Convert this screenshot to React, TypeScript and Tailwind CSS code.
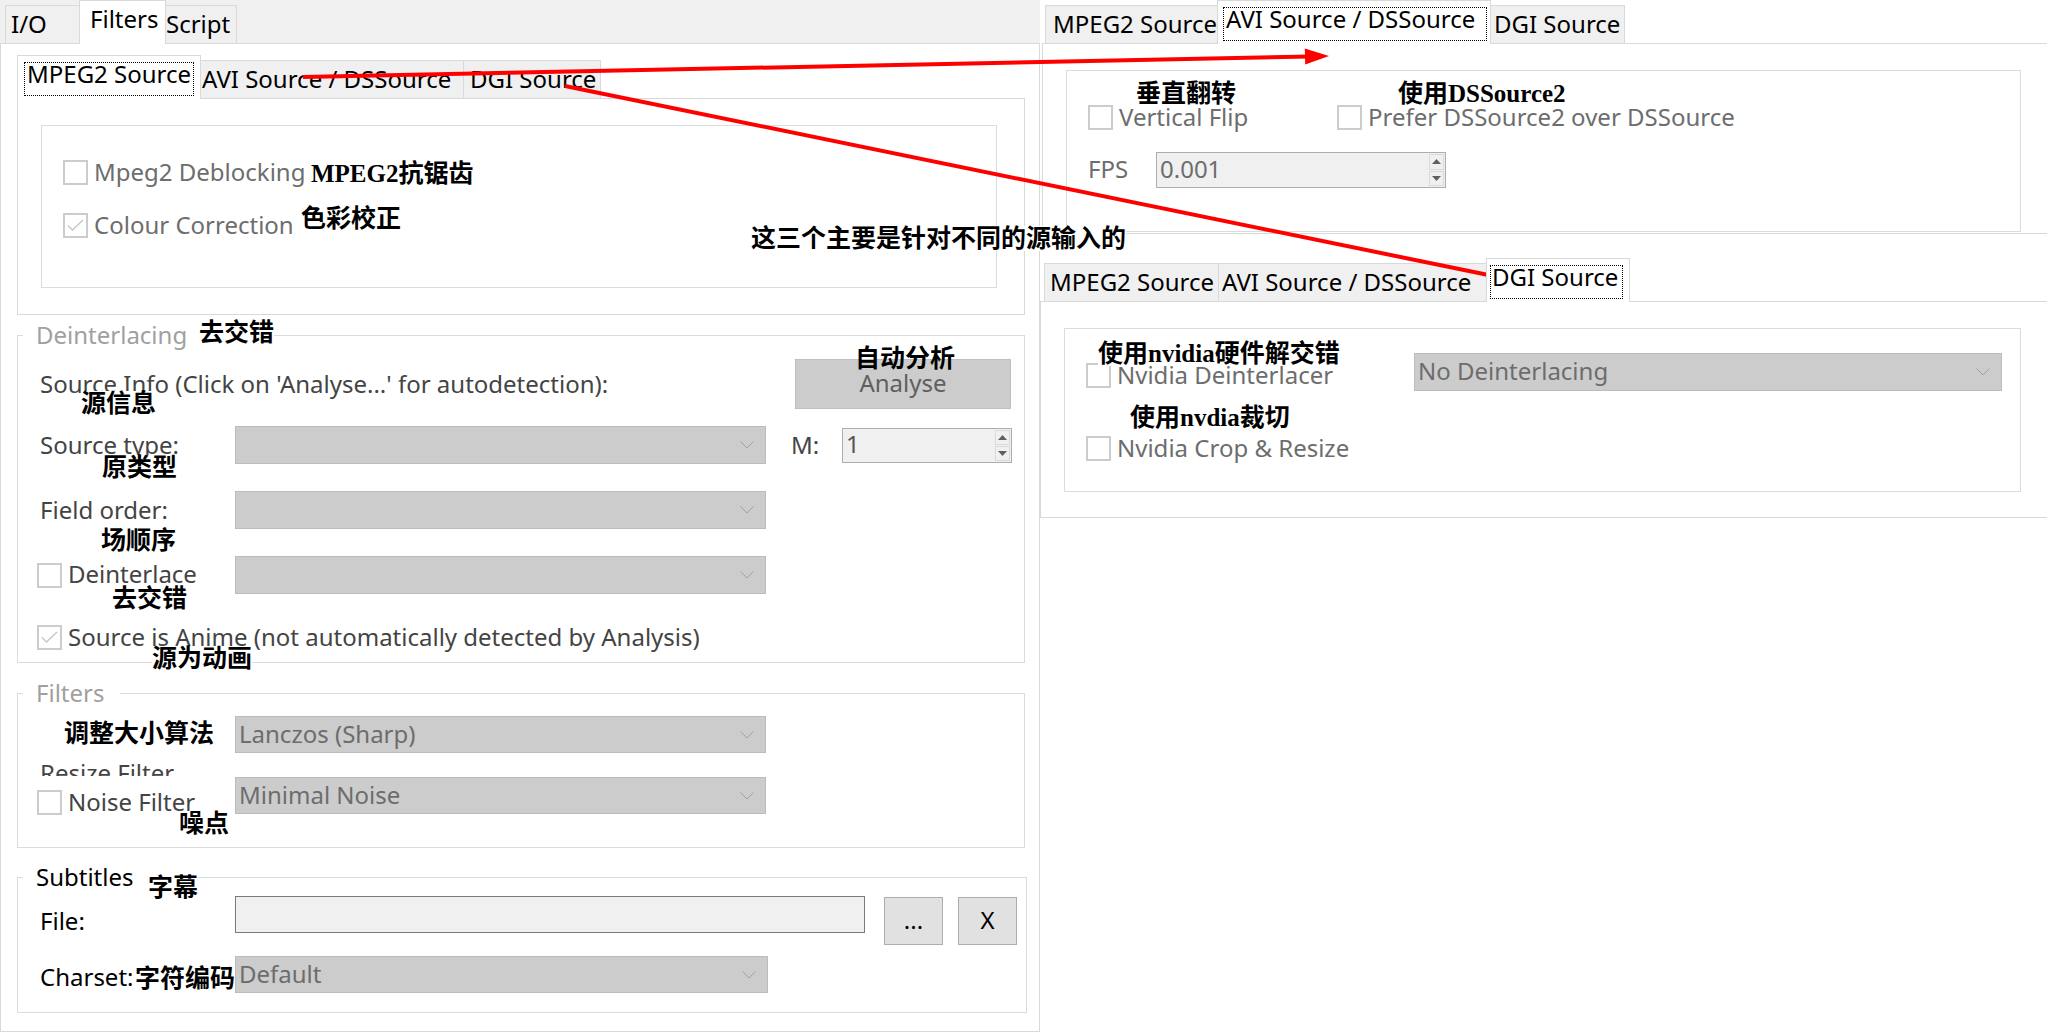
import React from 'react'

const NOTE =
  "absolute bg-white whitespace-nowrap font-bold text-black text-[25px] leading-[25px] font-['Liberation_Serif','Noto_Sans_CJK_SC',serif]"

function Note({ className, children }: { className: string; children: React.ReactNode }) {
  return <div className={`${NOTE} ${className}`}>{children}</div>
}

function Chevron() {
  return (
    <svg width="14" height="8" viewBox="0 0 14 8" className="shrink-0">
      <polyline points="0.5,0.5 7,7 13.5,0.5" fill="none" stroke="#a0a0a0" strokeWidth="1" />
    </svg>
  )
}

function Combo({ text, className }: { text?: string; className: string }) {
  return (
    <div
      className={`flex items-center justify-between shrink-0 bg-[#cccccc] border border-[#bcbcbc] pl-[3px] pr-[11px] text-[#6d6d6d] ${className}`}
    >
      <span className="whitespace-nowrap pb-[2px]">{text}</span>
      <Chevron />
    </div>
  )
}

function Check({ checked }: { checked?: boolean }) {
  return (
    <div className="w-[25px] h-[25px] shrink-0 border-2 border-[#cccccc] bg-white flex items-center justify-center">
      {checked && (
        <svg width="17" height="13" viewBox="0 0 17 13">
          <polyline points="1,6.5 5.5,11 16,1" fill="none" stroke="#c6c6c6" strokeWidth="1.4" />
        </svg>
      )}
    </div>
  )
}

function CheckRow({ label, checked, className = '' }: { label: string; checked?: boolean; className?: string }) {
  return (
    <div className={`flex items-center gap-[6px] h-[25px] ${className}`}>
      <Check checked={checked} />
      <span className="whitespace-nowrap pb-[2px]">{label}</span>
    </div>
  )
}

function Spin({ value, className }: { value: string; className: string }) {
  return (
    <div className={`flex shrink-0 bg-[#f0f0f0] border border-[#adadad] ${className}`}>
      <div className="flex-1 flex items-center pl-[3px] pb-[2px]">{value}</div>
      <div className="w-[16px] flex flex-col py-[1px] pr-[1px] gap-[1px]">
        <div className="flex-1 flex items-center justify-center border border-[#dadada]">
          <svg width="9" height="5" viewBox="0 0 9 5">
            <polygon points="0,5 4.5,0 9,5" fill="#606060" />
          </svg>
        </div>
        <div className="flex-1 flex items-center justify-center border border-[#dadada]">
          <svg width="9" height="5" viewBox="0 0 9 5">
            <polygon points="0,0 9,0 4.5,5" fill="#606060" />
          </svg>
        </div>
      </div>
    </div>
  )
}

function Tab({ children, className }: { children: React.ReactNode; className: string }) {
  return (
    <div
      className={`h-[39px] shrink-0 flex items-center pb-[2px] whitespace-nowrap bg-[#f0f0f0] border border-[#d9d9d9] ${className}`}
    >
      {children}
    </div>
  )
}

function ActiveTab({ children, className }: { children: React.ReactNode; className: string }) {
  return (
    <div
      className={`relative z-10 h-[44px] shrink-0 flex items-center whitespace-nowrap bg-white border-x border-t border-[#d9d9d9] ${className}`}
    >
      {children}
    </div>
  )
}

// selected tab with the dotted keyboard-focus rectangle
function FocusTab({ children, className, inner }: { children: React.ReactNode; className: string; inner: string }) {
  return (
    <div
      className={`relative z-10 h-[44px] shrink-0 bg-white border-x border-t border-[#d9d9d9] pt-[6px] pb-[3px] ${className}`}
    >
      <div className={`h-full border border-dotted border-black flex items-center pb-[11px] whitespace-nowrap ${inner}`}>
        {children}
      </div>
    </div>
  )
}

export default function App() {
  return (
    <div className="relative w-[2047px] h-[1033px] overflow-hidden bg-white flex text-[24px] leading-[32px] text-black font-['Noto_Sans',sans-serif]">
      {/* Left: Filters page */}
      <div className="w-[1040px] shrink-0 flex flex-col">
        <div className="flex items-end h-[44px] bg-[#f0f0f0]">
          <div className="w-[5px] h-full border-b border-[#d9d9d9]" />
          <Tab className="w-[75px] pl-[5px]">I/O</Tab>
          <ActiveTab className="w-[87px] -ml-px pl-[10px] pb-[7px]">Filters</ActiveTab>
          <Tab className="w-[72px] -ml-px pl-0">Script</Tab>
          <div className="flex-1 h-full border-b border-[#d9d9d9]" />
        </div>

        <div className="h-[988px] border-x border-b border-[#d9d9d9] pt-[11px] pl-[16px] flex flex-col items-start">
          {/* source type tabs */}
          <div className="w-[1008px]">
            <div className="flex items-end h-[44px]">
              <FocusTab className="w-[184px] pl-[6px] pr-[6px]" inner="pl-[2px]">
                MPEG2 Source
              </FocusTab>
              <Tab className="w-[264px] -ml-px pl-[1px]">AVI Source / DSSource</Tab>
              <Tab className="w-[138px] -ml-px pl-[6px]">DGI Source</Tab>
              <div className="flex-1 h-full border-b border-[#d9d9d9]" />
            </div>
            <div className="h-[216px] border-x border-b border-[#d9d9d9] pt-[26px] pl-[23px]">
              <div className="w-[956px] h-[163px] border border-[#dcdcdc] pt-[34px] pl-[21px] flex flex-col gap-[28px] text-[#6d6d6d]">
                <CheckRow label="Mpeg2 Deblocking" />
                <CheckRow label="Colour Correction" checked />
              </div>
            </div>
          </div>

          {/* Deinterlacing */}
          <fieldset className="mt-[4px] w-[1008px] border border-[#dcdcdc] pb-[12px] text-[#444444]">
            <legend className="ml-[5px] pl-[13px] pr-[16px] text-[#a0a0a0]">Deinterlacing</legend>
            <div className="flex items-center mt-[8px] h-[50px] pl-[22px] pr-[13px]">
              <span className="flex-1 whitespace-nowrap">Source Info (Click on 'Analyse...' for autodetection):</span>
              <div className="w-[216px] h-[50px] bg-[#cccccc] border border-[#bfbfbf] flex items-center justify-center pb-[2px] text-[#5f5f5f]">
                Analyse
              </div>
            </div>
            <div className="flex items-center mt-[17px] h-[38px] pl-[22px]">
              <span className="w-[195px] shrink-0 whitespace-nowrap">Source type:</span>
              <Combo className="w-[531px] h-[38px]" />
              <span className="ml-[25px] w-[51px] shrink-0">M:</span>
              <Spin value="1" className="w-[170px] h-[35px] text-[#555555]" />
            </div>
            <div className="flex items-center mt-[27px] h-[38px] pl-[22px]">
              <span className="w-[195px] shrink-0 whitespace-nowrap">Field order:</span>
              <Combo className="w-[531px] h-[38px]" />
            </div>
            <div className="flex items-center mt-[27px] h-[38px] pl-[19px]">
              <div className="w-[198px] shrink-0">
                <CheckRow label="Deinterlace" />
              </div>
              <Combo className="w-[531px] h-[38px]" />
            </div>
            <CheckRow
              className="mt-[31px] pl-[19px]"
              label="Source is Anime (not automatically detected by Analysis)"
              checked
            />
          </fieldset>

          {/* Filters */}
          <fieldset className="mt-[14px] w-[1008px] border border-[#dcdcdc] pb-[32px] text-[#444444]">
            <legend className="ml-[5px] pl-[13px] pr-[16px] text-[#a0a0a0]">Filters</legend>
            <div className="mt-[7px] pl-[217px]">
              <Combo className="w-[531px] h-[37px]" text="Lanczos (Sharp)" />
            </div>
            <div className="flex">
              <div className="w-[217px] shrink-0 flex flex-col pt-[4px]">
                {/* label partly hidden by the widget below it */}
                <div className="h-[19px] overflow-hidden pl-[22px] whitespace-nowrap">Resize Filter</div>
                <CheckRow className="mt-[14px] pl-[19px]" label="Noise Filter" />
              </div>
              <Combo className="mt-[24px] w-[531px] h-[37px]" text="Minimal Noise" />
            </div>
          </fieldset>

          {/* Subtitles */}
          <fieldset className="mt-[13px] w-[1010px] border border-[#dcdcdc] pb-[19px]">
            <legend className="ml-[5px] pl-[13px] pr-[16px]">Subtitles</legend>
            <div className="flex items-start mt-[3px]">
              <span className="w-[217px] h-[50px] shrink-0 flex items-center pl-[22px]">File:</span>
              <div className="w-[630px] h-[37px] shrink-0 bg-[#f0f0f0] border border-[#7a7a7a]" />
              <div className="ml-[19px] mt-[1px] w-[59px] h-[48px] shrink-0 bg-[#e1e1e1] border border-[#adadad] flex items-center justify-center pb-[2px]">
                ...
              </div>
              <div className="ml-[15px] mt-[1px] w-[59px] h-[48px] shrink-0 bg-[#e1e1e1] border border-[#adadad] flex items-center justify-center pb-[2px]">
                X
              </div>
            </div>
            <div className="flex items-center mt-[10px] h-[37px]">
              <span className="w-[217px] shrink-0 pl-[22px] pt-[5px]">Charset:</span>
              <Combo className="w-[533px] h-[37px]" text="Default" />
            </div>
          </fieldset>
        </div>
      </div>

      {/* Right: the other two source tabs */}
      <div className="flex-1 flex flex-col">
        <div className="flex items-end h-[44px] ml-[2px]">
          <div className="w-[3px] h-full border-b border-[#d9d9d9]" />
          <Tab className="w-[173px] pl-[7px]">MPEG2 Source</Tab>
          <FocusTab className="w-[274px] -ml-px pl-[5px] pr-[3px]" inner="pl-[2px]">
            AVI Source / DSSource
          </FocusTab>
          <Tab className="w-[135px] -ml-px pl-[3px]">DGI Source</Tab>
          <div className="flex-1 h-full border-b border-[#d9d9d9]" />
        </div>
        <div className="ml-[2px] h-[190px] border-l border-b border-[#d9d9d9] pt-[26px] pl-[23px]">
          <div className="w-[955px] h-[162px] border border-[#dcdcdc] pt-[34px] pl-[21px] text-[#6d6d6d]">
            <div className="flex">
              <CheckRow className="w-[249px]" label="Vertical Flip" />
              <CheckRow label="Prefer DSSource2 over DSSource" />
            </div>
            <div className="flex items-center mt-[22px] h-[36px]">
              <span className="w-[68px] shrink-0 pb-[2px]">FPS</span>
              <Spin value="0.001" className="w-[290px] h-[36px]" />
            </div>
          </div>
        </div>

        <div className="flex items-end h-[44px] mt-[24px]">
          <div className="w-[4px] h-full border-b border-[#d9d9d9]" />
          <Tab className="w-[175px] pl-[5px]">MPEG2 Source</Tab>
          <Tab className="w-[269px] -ml-px pl-[3px]">AVI Source / DSSource</Tab>
          <FocusTab className="w-[144px] -ml-px pl-[3px] pr-[6px]" inner="pl-[1px]">
            DGI Source
          </FocusTab>
          <div className="flex-1 h-full border-b border-[#d9d9d9]" />
        </div>
        <div className="h-[216px] border-l border-b border-[#d9d9d9] pt-[26px] pl-[23px]">
          <div className="w-[957px] h-[164px] border border-[#dcdcdc] pt-[24px] pl-[21px] text-[#6d6d6d]">
            <div className="flex items-center h-[38px]">
              <div className="w-[328px] shrink-0 pt-[7px]">
                <CheckRow label="Nvidia Deinterlacer" />
              </div>
              <Combo className="w-[588px] h-[38px]" text="No Deinterlacing" />
            </div>
            <CheckRow className="mt-[45px]" label="Nvidia Crop & Resize" />
          </div>
        </div>
      </div>

      {/* pasted annotations */}
      <Note className="left-[311px] top-[161px]">MPEG2抗锯齿</Note>
      <Note className="left-[301px] top-[206px]">色彩校正</Note>
      <Note className="left-[751px] top-[226px]">这三个主要是针对不同的源输入的</Note>
      <Note className="left-[199px] top-[320px]">去交错</Note>
      <Note className="left-[855px] top-[346px] !bg-transparent">自动分析</Note>
      <Note className="left-[81px] top-[391px]">源信息</Note>
      <Note className="left-[102px] top-[455px]">原类型</Note>
      <Note className="left-[101px] top-[528px]">场顺序</Note>
      <Note className="left-[112px] top-[586px]">去交错</Note>
      <Note className="left-[152px] top-[646px]">源为动画</Note>
      <Note className="left-[64px] top-[721px]">调整大小算法</Note>
      <Note className="left-[179px] top-[811px]">噪点</Note>
      <Note className="left-[148px] top-[875px]">字幕</Note>
      <Note className="left-[135px] top-[966px]">字符编码</Note>
      <Note className="left-[1136px] top-[81px]">垂直翻转</Note>
      <Note className="left-[1398px] top-[81px]">使用DSSource2</Note>
      <Note className="left-[1098px] top-[341px]">使用nvidia硬件解交错</Note>
      <Note className="left-[1130px] top-[405px]">使用nvdia裁切</Note>

      {/* red arrows */}
      <svg
        className="absolute left-0 top-0 pointer-events-none"
        width="2047"
        height="1033"
        viewBox="0 0 2047 1033"
      >
        <line x1="303" y1="77" x2="1310" y2="56.5" stroke="#ff0000" strokeWidth="4" />
        <polygon points="1329,56 1305.2,64.5 1304.8,48.5" fill="#ff0000" />
        <line x1="565" y1="86" x2="1508" y2="279" stroke="#ff0000" strokeWidth="4" />
        <polygon points="1528,283 1502.9,286 1506.1,270.4" fill="#ff0000" />
      </svg>
    </div>
  )
}
